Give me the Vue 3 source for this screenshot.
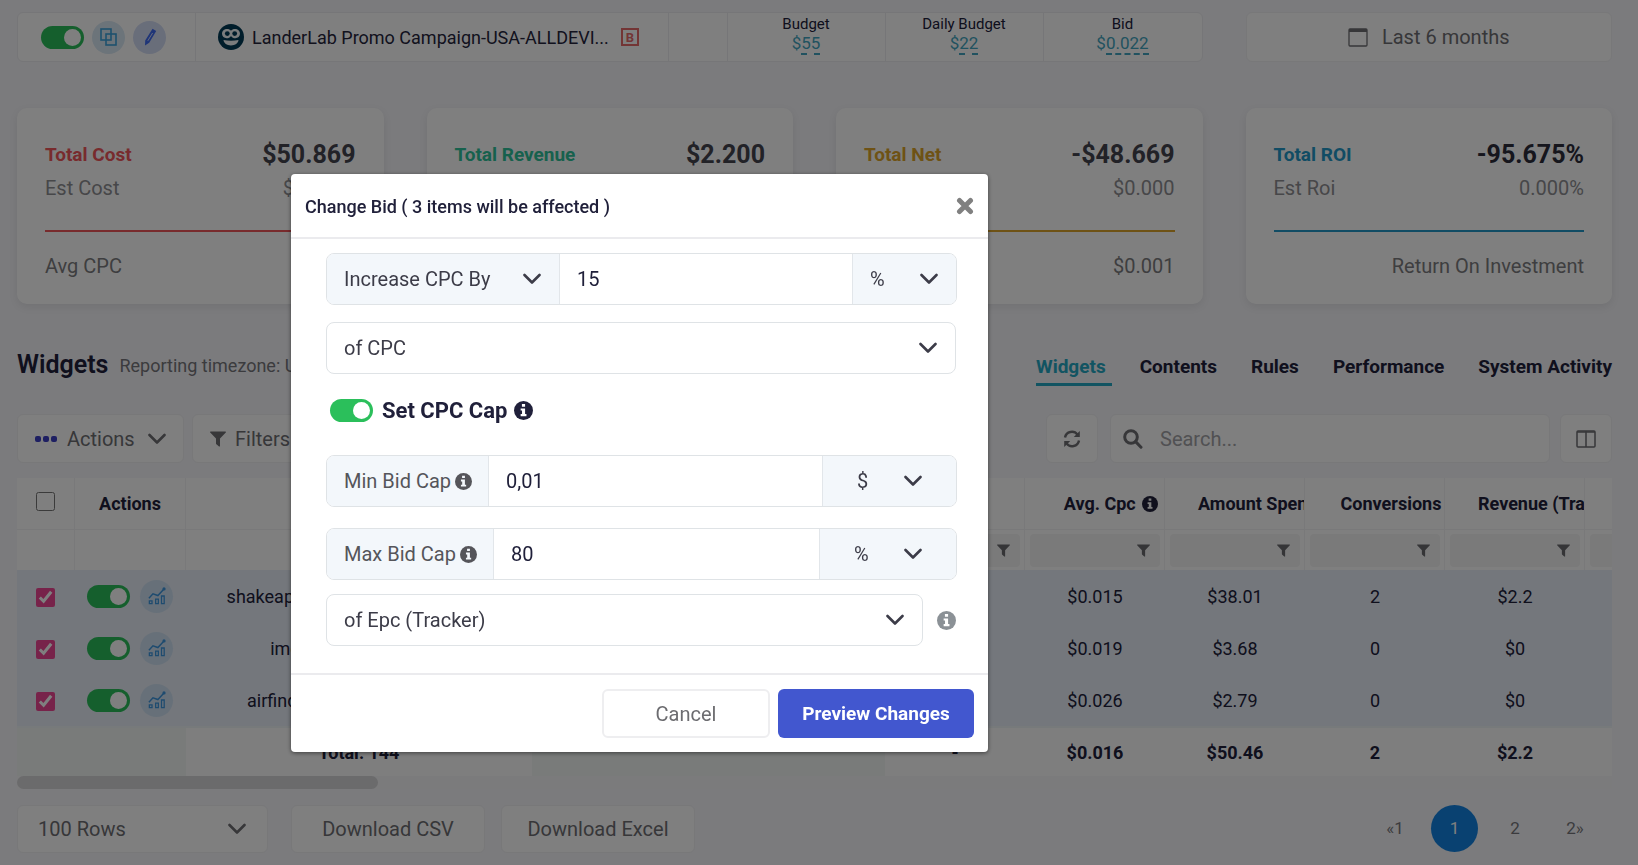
<script setup>
import { ref, reactive } from 'vue'

const cards = [
  { tone: 'red', title: 'Total Cost', total: '$50.869', est: 'Est Cost', estValue: '$00.000', foot: 'Avg CPC', footValue: '$0.016' },
  { tone: 'green', title: 'Total Revenue', total: '$2.200', est: 'Est Revenue', estValue: '$0.000', foot: 'Avg EPC', footValue: '$0.001' },
  { tone: 'amber', title: 'Total Net', total: '-$48.669', est: 'Est Net', estValue: '$0.000', foot: 'Net EPC', footValue: '$0.001' },
  { tone: 'blue', title: 'Total ROI', total: '-95.675%', est: 'Est Roi', estValue: '0.000%', foot: '', footValue: 'Return On Investment' }
]
const budgets = [
  { label: 'Budget', value: '55' },
  { label: 'Daily Budget', value: '22' },
  { label: 'Bid', value: '0.022' }
]
const tabs = ['Widgets', 'Contents', 'Rules', 'Performance', 'System Activity']
const rows = reactive([
  { name: 'shakeapp-mobile_placement-101', on: true, checked: true, cells: ['$0.015', '$38.01', '2', '$2.2'] },
  { name: 'img-network-widgets1', on: true, checked: true, cells: ['$0.019', '$3.68', '0', '$0'] },
  { name: 'airfind-mobile-widget-25104', on: true, checked: true, cells: ['$0.026', '$2.79', '0', '$0'] }
])
const totals = ['$0.016', '$50.46', '2', '$2.2']
const allChecked = ref(false)
const campaignOn = ref(true)
const capOn = ref(true)
const search = ref('')
const amount = ref('15')
const minCap = ref('0,01')
const maxCap = ref('80')
</script>

<template>
  <div class="page">
    <svg class="defs" aria-hidden="true">
      <symbol id="chevron" viewBox="0 0 18 12"><path d="M1.5 2 9 9.5 16.500 2" fill="none" stroke="currentColor" stroke-width="2.6" stroke-linecap="round" stroke-linejoin="round" /></symbol>
      <symbol id="info" viewBox="0 0 18 18"><circle cx="9" cy="9" r="9" fill="currentColor" /><path d="M7.500 2.800h3v2.600h-3zM6.300 7h4.200v5.400h1.300v2H6.300v-2h1.300V9H6.300z" fill="var(--hole, #fff)" /></symbol>
      <symbol id="funnel" viewBox="0 0 16 16"><path d="M.6.500h14.800c.5 0 .8.600.4 1L10 7.600V15c0 .5-.6.700-1 .4l-2.600-2.200a1 1 0 0 1-.4-.8V7.600L.2 1.500C-.2 1.100.1.500.6.500z" fill="currentColor" /></symbol>
      <symbol id="stats" viewBox="0 0 20 20"><g fill="none" stroke="currentColor" stroke-width="1.400"><path d="M1.500 15.500h3v3h-3zM8.500 13.500h3v5h-3zM15 10h3v8.500h-3z" /><path d="M1 12.500 5.500 7.500 11 9.500 17.500 2.500" stroke-width="1.600" /></g><circle cx="17.800" cy="2.200" r="1.800" fill="currentColor" /></symbol>
    </svg>

    <main>
      <header class="top">
        <section class="campaign">
          <div class="controls">
            <input v-model="campaignOn" type="checkbox" class="switch" aria-label="Campaign active" />
            <button class="round cyan" aria-label="Duplicate">
              <svg width="17" height="18" viewBox="0 0 17 18" fill="none" stroke="currentColor" stroke-width="1.600"><rect x="1" y="1" width="10" height="11" /><rect x="6" y="6" width="10" height="11" /></svg>
            </button>
            <button class="round indigo" aria-label="Edit">
              <svg width="16" height="18" viewBox="0 0 16 18" fill="currentColor"><path d="m10.500.8 3.700 2.200L7.200 14.800 3 17.500 3.200 12.600z" /><path d="m10.600 5-4.800 7.800" stroke="#d3dcf5" stroke-width="1" /></svg>
            </button>
          </div>
          <div class="name">
            <svg width="26" height="26" viewBox="0 0 26 26">
              <circle cx="13" cy="13" r="13" fill="#003a56" />
              <path d="M4 9.800C4 6.800 6.300 5 9 5c1.700 0 3.200.6 4 1.800C13.800 5.600 15.300 5 17 5c2.700 0 5 1.800 5 4.800 0 2.700-2.200 4.400-4.600 4.400-1.900 0-3.400-.9-4.400-2.300-1 1.400-2.500 2.300-4.400 2.300C6.200 14.200 4 12.500 4 9.800z" fill="#f4f8fa" />
              <circle cx="9.300" cy="9.600" r="2.400" fill="#003a56" /><circle cx="16.700" cy="9.600" r="2.400" fill="#003a56" />
              <path d="M5.500 16c4.800 1 10.200 1 15 0-.4 3.200-3.200 5.400-7.500 5.400S5.900 19.200 5.500 16z" fill="#f4f8fa" />
            </svg>
            <span class="campaign-name">LanderLab Promo Campaign-USA-ALLDEVI...</span>
            <span class="tag">B</span>
          </div>
          <div class="spacer"></div>
          <div v-for="b in budgets" :key="b.label" class="budget">
            <span>{{ b.label }}</span>
            <a href="#">$<u>{{ b.value }}</u></a>
          </div>
        </section>
        <button class="box date">
          <svg width="20" height="19" viewBox="0 0 20 19" fill="none" stroke="currentColor"><rect x="1" y="1" width="18" height="17" rx="1" stroke-width="1.300" /><path d="M1 2.500h18" stroke-width="3" /></svg>
          Last 6 months
        </button>
      </header>

      <section class="cards">
        <article v-for="c in cards" :key="c.title" class="card" :class="c.tone">
          <div class="line title"><h3>{{ c.title }}</h3><strong>{{ c.total }}</strong></div>
          <div class="line est"><span>{{ c.est }}</span><span>{{ c.estValue }}</span></div>
          <div class="line foot"><span>{{ c.foot }}</span><span>{{ c.footValue }}</span></div>
        </article>
      </section>

      <div class="heading">
        <h2>Widgets</h2>
        <span class="zone">Reporting timezone: UTC</span>
        <nav>
          <a v-for="(t, i) in tabs" :key="t" href="#" :class="{ active: i === 0 }">{{ t }}</a>
        </nav>
      </div>

      <div class="toolbar">
        <button class="box actions">
          <svg width="23" height="6" viewBox="0 0 23 6" fill="#3c3fc4"><rect width="6" height="6" rx="2" /><rect x="8" width="6" height="6" rx="2" /><rect x="16" width="6" height="6" rx="2" /></svg>
          Actions
          <svg class="chev" width="18" height="12"><use href="#chevron" /></svg>
        </button>
        <button class="box filters">
          <svg width="16" height="16"><use href="#funnel" /></svg>
          Filters
        </button>
        <button class="box square push" aria-label="Refresh">
          <svg width="18" height="18" viewBox="0 0 18 18" fill="none" stroke="currentColor" stroke-width="2.400"><path d="M2 7.500A7 7 0 0 1 14.500 4.600M16 10.500A7 7 0 0 1 3.500 13.400" /><path d="M16.800 1v6h-6zM1.200 17v-6h6z" fill="currentColor" stroke="none" /></svg>
        </button>
        <label class="box search">
          <svg width="20" height="20" viewBox="0 0 20 20" fill="none" stroke="currentColor" stroke-width="3"><circle cx="8" cy="8" r="6.300" /><path d="m12.600 12.600 5.400 5.600" stroke-linecap="round" /></svg>
          <input v-model="search" type="text" placeholder="Search..." aria-label="Search" />
        </label>
        <button class="box square" aria-label="Columns">
          <svg width="20" height="18" viewBox="0 0 20 18" fill="none" stroke="currentColor" stroke-width="1.500"><rect x="1" y="1" width="18" height="16" rx="1" /><path d="M10 1v16M1 2h18" /></svg>
        </button>
      </div>

      <div class="table-wrap">
        <table>
          <colgroup>
            <col class="c-check" /><col class="c-actions" /><col class="c-name" /><col class="c-wide" />
            <col v-for="n in 6" :key="n" class="c-num" />
          </colgroup>
          <thead>
            <tr class="head">
              <th class="all"><input v-model="allChecked" type="checkbox" class="tick" aria-label="Select all" /></th>
              <th>Actions</th>
              <th>Widget</th>
              <th></th>
              <th></th>
              <th class="num">Avg. Cpc <svg class="info" width="16" height="16"><use href="#info" /></svg></th>
              <th class="num">Amount Spent</th>
              <th class="num">Conversions</th>
              <th class="num">Revenue (Tracker)</th>
              <th></th>
            </tr>
            <tr class="filter">
              <td></td><td></td><td></td><td></td>
              <td v-for="n in 6" :key="n"><button aria-label="Filter"><svg width="13" height="13"><use href="#funnel" /></svg></button></td>
            </tr>
          </thead>
          <tbody>
            <tr v-for="r in rows" :key="r.name">
              <td class="pick"><input v-model="r.checked" type="checkbox" class="tick" :aria-label="'Select ' + r.name" /></td>
              <td>
                <div class="row-actions">
                  <input v-model="r.on" type="checkbox" class="switch" :aria-label="'Toggle ' + r.name" />
                  <button class="round sky" aria-label="Statistics"><svg width="18" height="20"><use href="#stats" /></svg></button>
                </div>
              </td>
              <td>{{ r.name }}</td>
              <td></td><td></td>
              <td v-for="(v, i) in r.cells" :key="i">{{ v }}</td>
              <td></td>
            </tr>
          </tbody>
          <tfoot>
            <tr>
              <td class="tint"></td><td class="tint"></td><td>Total: 144</td><td class="tint"></td><td>-</td>
              <td v-for="(v, i) in totals" :key="i">{{ v }}</td>
              <td></td>
            </tr>
          </tfoot>
        </table>
        <div class="track"><div class="thumb"></div></div>
      </div>

      <footer class="bottom">
        <div class="select box rows">
          <select aria-label="Rows per page"><option>100 Rows</option></select>
          <svg width="18" height="12"><use href="#chevron" /></svg>
        </div>
        <button class="box download first">Download CSV</button>
        <button class="box download">Download Excel</button>
        <nav class="pages">
          <a href="#">«1</a><a href="#" class="current">1</a><a href="#">2</a><a href="#">2»</a>
        </nav>
      </footer>
    </main>

    <div class="overlay">
      <form class="modal" role="dialog" aria-labelledby="modal-title" @submit.prevent>
        <header>
          <h1 id="modal-title">Change Bid ( 3 items will be affected )</h1>
          <button type="button" class="close" aria-label="Close">
            <svg width="18" height="18" viewBox="0 0 18 18"><path d="M3.500 3.500l11 11M14.500 3.500l-11 11" stroke="#808080" stroke-width="5" stroke-linecap="round" /></svg>
          </button>
        </header>
        <div class="body">
          <div class="group first">
            <div class="select addon mode">
              <select aria-label="Change type"><option>Increase CPC By</option></select>
              <svg width="18" height="12"><use href="#chevron" /></svg>
            </div>
            <input v-model="amount" type="text" aria-label="Amount" />
            <div class="select addon unit">
              <select aria-label="Amount unit"><option>%</option></select>
              <svg width="18" height="12"><use href="#chevron" /></svg>
            </div>
          </div>
          <div class="group select base">
            <select aria-label="Base value"><option>of CPC</option></select>
            <svg width="18" height="12"><use href="#chevron" /></svg>
          </div>
          <label class="cap">
            <input v-model="capOn" type="checkbox" class="switch" />
            Set CPC Cap
            <svg width="19" height="19"><use href="#info" /></svg>
          </label>
          <div class="group min">
            <label for="min-cap" class="addon">Min Bid Cap <svg width="17" height="17"><use href="#info" /></svg></label>
            <input id="min-cap" v-model="minCap" type="text" />
            <div class="select addon wide">
              <select aria-label="Min bid cap unit"><option>$</option></select>
              <svg width="18" height="12"><use href="#chevron" /></svg>
            </div>
          </div>
          <div class="group max">
            <label for="max-cap" class="addon">Max Bid Cap <svg width="17" height="17"><use href="#info" /></svg></label>
            <input id="max-cap" v-model="maxCap" type="text" />
            <div class="select addon wide">
              <select aria-label="Max bid cap unit"><option>%</option></select>
              <svg width="18" height="12"><use href="#chevron" /></svg>
            </div>
          </div>
          <div class="tracker">
            <div class="group select">
              <select aria-label="Tracker value"><option>of Epc (Tracker)</option></select>
              <svg width="18" height="12"><use href="#chevron" /></svg>
            </div>
            <svg class="hint" width="19" height="19"><use href="#info" /></svg>
          </div>
        </div>
        <footer>
          <button type="button" class="cancel">Cancel</button>
          <button type="submit" class="preview">Preview Changes</button>
        </footer>
      </form>
    </div>
  </div>
</template>

<style>
html, body { height: 100%; background: #f6f6fa; overflow: hidden; }
</style>

<style scoped>
.page { font-family: Roboto, "Liberation Sans", sans-serif; font-size: 20px; color: #20203a; }
.page *, .page *::before { box-sizing: border-box; }
.defs { position: absolute; width: 0; height: 0; }
h1, h2, h3 { margin: 0; font-weight: 500; }
button, input, select { font: inherit; color: inherit; }
button { cursor: pointer; padding: 0; border: 0; background: none; }
a { color: inherit; text-decoration: none; }
main { padding: 12px 26px 0 17px; }

.switch { appearance: none; flex: none; width: 43px; height: 23px; margin: 0; padding: 3px; border-radius: 12px; background: #2bbf5b; display: flex; justify-content: flex-end; }
.switch::before { content: ""; width: 17px; height: 17px; border-radius: 50%; background: #fff; }
.switch:not(:checked) { justify-content: flex-start; background: #bbb; }
.round { display: flex; align-items: center; justify-content: center; width: 33px; height: 33px; border-radius: 50%; }
.cyan { background: #d8e8f4; color: #3da2dc; }
.indigo { background: #d3dcf5; color: #3f6bf0; }
.sky { background: #cfe1f3; color: #3c96df; }
.box { display: flex; align-items: center; border: 1px solid #f0f0f3; border-radius: 6px; background: #fff; color: #6e6e73; }

.top { display: grid; grid-template-columns: repeat(4, 1fr); column-gap: 43px; height: 50px; }
.campaign { grid-column: span 3; display: flex; border: 1px solid #ececf0; border-radius: 6px; background: #fff; }
.campaign > div { border-right: 1px solid #ececf0; }
.campaign > div:last-child { border-right: 0; }
.controls { display: flex; align-items: center; width: 178px; padding-left: 23px; gap: 8px; }
.name { flex: 1; display: flex; align-items: center; gap: 8px; padding-left: 22px; color: #25253c; font-size: 18px; white-space: nowrap; }
.name svg { flex: none; }
.tag { display: flex; align-items: center; justify-content: center; width: 18px; height: 18px; margin-left: 4px; border: 2px solid #e66a6a; font-size: 13px; font-weight: 700; color: #e66a6a; }
.spacer { width: 59px; }
.budget { display: flex; flex-direction: column; align-items: center; width: 158px; padding-top: 2px; font-size: 15px; line-height: 19px; }
.budget a { color: #43a5c0; font-size: 17px; }
.budget u { text-decoration: none; border-bottom: 2px dashed #43a5c0; }
.date { justify-content: center; gap: 14px; }

.cards { display: grid; grid-template-columns: repeat(4, 1fr); column-gap: 43px; margin-top: 46px; }
.card { padding: 32px 28px 26px; border-radius: 10px; background: #fff; box-shadow: 0 3px 8px rgba(0, 0, 0, .08); }
.line { display: flex; justify-content: space-between; align-items: center; line-height: 24px; color: #7c7c80; }
.line.title { line-height: 30px; }
.title h3 { font-size: 19px; font-weight: 700; color: var(--tone); }
.title strong { font-size: 25px; font-weight: 700; color: #44444f; }
.est { margin-top: 6px; color: #8e8e92; }
.foot { margin-top: 30px; padding-top: 22px; border-top: 2px solid var(--tone); }
.red { --tone: #f0565b; }
.green { --tone: #2fc29a; }
.amber { --tone: #dda52a; }
.blue { --tone: #2299c8; }
.blue strong { color: #2c2c3a; }

.heading { display: flex; align-items: center; height: 42px; margin-top: 39px; }
.heading h2 { font-size: 25px; font-weight: 600; }
.zone { margin-left: 11px; padding-top: 2px; font-size: 18px; color: #77777c; }
.heading nav { display: flex; margin-left: auto; gap: 34px; font-size: 19px; font-weight: 700; }
.heading nav a { height: 36px; margin-top: 7px; line-height: 34px; }
.heading nav .active { padding-right: 6px; margin-right: -6px; border-bottom: 3px solid #25a9c4; color: #25a9c4; }

.toolbar { display: flex; gap: 8px; height: 49px; margin-top: 29px; }
.actions { width: 167px; padding-left: 17px; gap: 9px; }
.chev { margin-left: 4px; }
.filters { width: 130px; padding-left: 17px; gap: 9px; }
.square { justify-content: center; width: 52px; }
.push { margin-left: auto; }
.search { width: 440px; margin: 0 2px 0 4px; padding-left: 12px; gap: 15px; }
.search input { flex: 1; min-width: 0; border: 0; background: none; outline: 0; }
.search input::placeholder { color: #a2a2a6; }

.table-wrap { margin-top: 15px; overflow: hidden; background: #fff; }
table { width: 1708px; table-layout: fixed; border-collapse: separate; border-spacing: 0; text-align: center; font-size: 18px; }
.c-check { width: 58px; }
.c-actions { width: 111px; }
.c-name { width: 346px; }
.c-wide { width: 353px; }
.c-num { width: 140px; }
th, td { padding: 0; overflow: hidden; white-space: nowrap; }
th { height: 52px; font-size: 18px; font-weight: 700; border-right: 1px solid #f3f3f4; border-bottom: 1px solid #f3f3f4; }
th.num { padding-left: 33px; }
th.all { padding: 0 1px 6px 0; }
td.pick { padding-right: 2px; }
.info { vertical-align: -2px; margin-left: 2px; }
.filter td { height: 40px; border-right: 1px solid #f3f3f4; }
.filter button { display: flex; align-items: center; justify-content: flex-end; width: 130px; height: 33px; margin-left: 5px; padding-right: 10px; border-radius: 4px; background: #f4f4f5; color: #6a6a6e; }
tbody td { height: 52px; background: #e8eef8; }
tfoot td { height: 50px; background: #fdfdfd; font-weight: 700; border-top: 2px solid #eef4f6; }
tfoot .tint { background: #f2f7f5; }
.tick { width: 19px; height: 19px; margin: 0; vertical-align: middle; accent-color: #ee4795; }
.row-actions { display: flex; align-items: center; gap: 10px; padding-left: 12px; }
.track { height: 13px; background: #f6f6f8; }
.thumb { width: 361px; height: 13px; border-radius: 7px; background: #d6d6d8; }

.bottom { display: flex; height: 48px; margin-top: 16px; }
.select { position: relative; }
.select select { width: 100%; height: 100%; border: 0; outline: 0; background: none; appearance: none; }
.select svg { position: absolute; right: 18px; top: 50%; margin-top: -6px; pointer-events: none; }
.rows { width: 251px; }
.rows select { padding: 0 20px; }
.rows svg { right: 21px; }
.download { justify-content: center; width: 194px; margin-right: 16px; }
.download.first { margin-left: 23px; }
.pages { display: flex; align-items: center; margin-left: auto; padding: 0 7px 2px 0; font-size: 17px; color: #77777c; }
.pages a { width: 60px; line-height: 47px; text-align: center; }
.pages .current { width: 47px; margin: 0 7px 0 6px; border-radius: 50%; background: #1283e2; color: #fff; }

.overlay { position: fixed; inset: 0; padding: 174px 0 0 291px; background: rgba(0, 0, 0, .5); }
.modal { width: 697px; border-radius: 4px; background: #fff; box-shadow: 0 1px 4px rgba(0, 0, 0, .5); color: #3c3c48; }
.modal header { display: flex; align-items: center; justify-content: space-between; height: 65px; padding: 0 14px; border-bottom: 2px solid #ebebee; }
.modal h1 { padding-top: 2px; font-size: 18px; color: #20203a; }
.close { display: flex; }
.body { padding: 14px 31px 27px 35px; }
.group { display: flex; height: 52px; border: 1px solid #dfe3e6; border-radius: 8px; background: #fff; }
.group.first { margin-bottom: 17px; }
.group > input { flex: 1; min-width: 0; padding: 0 17px; border: 0; outline: 0; background: none; color: #20203a; }
.group select { padding: 0 17px; }
.addon { background: #f3f7fb; border-right: 1px solid #e2e6ea; border-radius: 7px 0 0 7px; }
label.addon { display: flex; align-items: center; gap: 4px; padding: 0 16px 0 17px; color: #55555a; --hole: #f3f7fb; }
.addon:last-child { border-right: 0; border-left: 1px solid #e2e6ea; border-radius: 0 7px 7px 0; }
.mode { width: 233px; }
.unit { width: 104px; }
.group.base { margin-right: 1px; }
.group.base > svg { right: 18px; }
.wide { width: 134px; }
.wide select { padding-left: 34px; }
.wide svg { right: 34px; }
.max .wide { width: 137px; }
.cap { display: flex; align-items: center; height: 24px; margin: 24px 4px 33px; color: #20203a; font-size: 22px; font-weight: 700; }
.cap .switch { margin-right: 9px; }
.cap svg { margin-left: 7px; }
.min { margin-bottom: 21px; }
.max { margin-bottom: 14px; }
.tracker { display: flex; align-items: center; gap: 14px; }
.tracker .group { flex: 1; }
.hint { margin-right: 1px; color: #8b9196; }
.modal footer { display: flex; justify-content: flex-end; gap: 8px; padding: 14px; border-top: 2px solid #ebebee; }
.modal footer button { height: 49px; border-radius: 6px; }
.cancel { width: 168px; border: 2px solid #eeeef0; color: #6c6c70; }
.modal footer .preview { width: 196px; background: #4257cf; color: #fff; font-size: 19px; font-weight: 700; }
</style>
